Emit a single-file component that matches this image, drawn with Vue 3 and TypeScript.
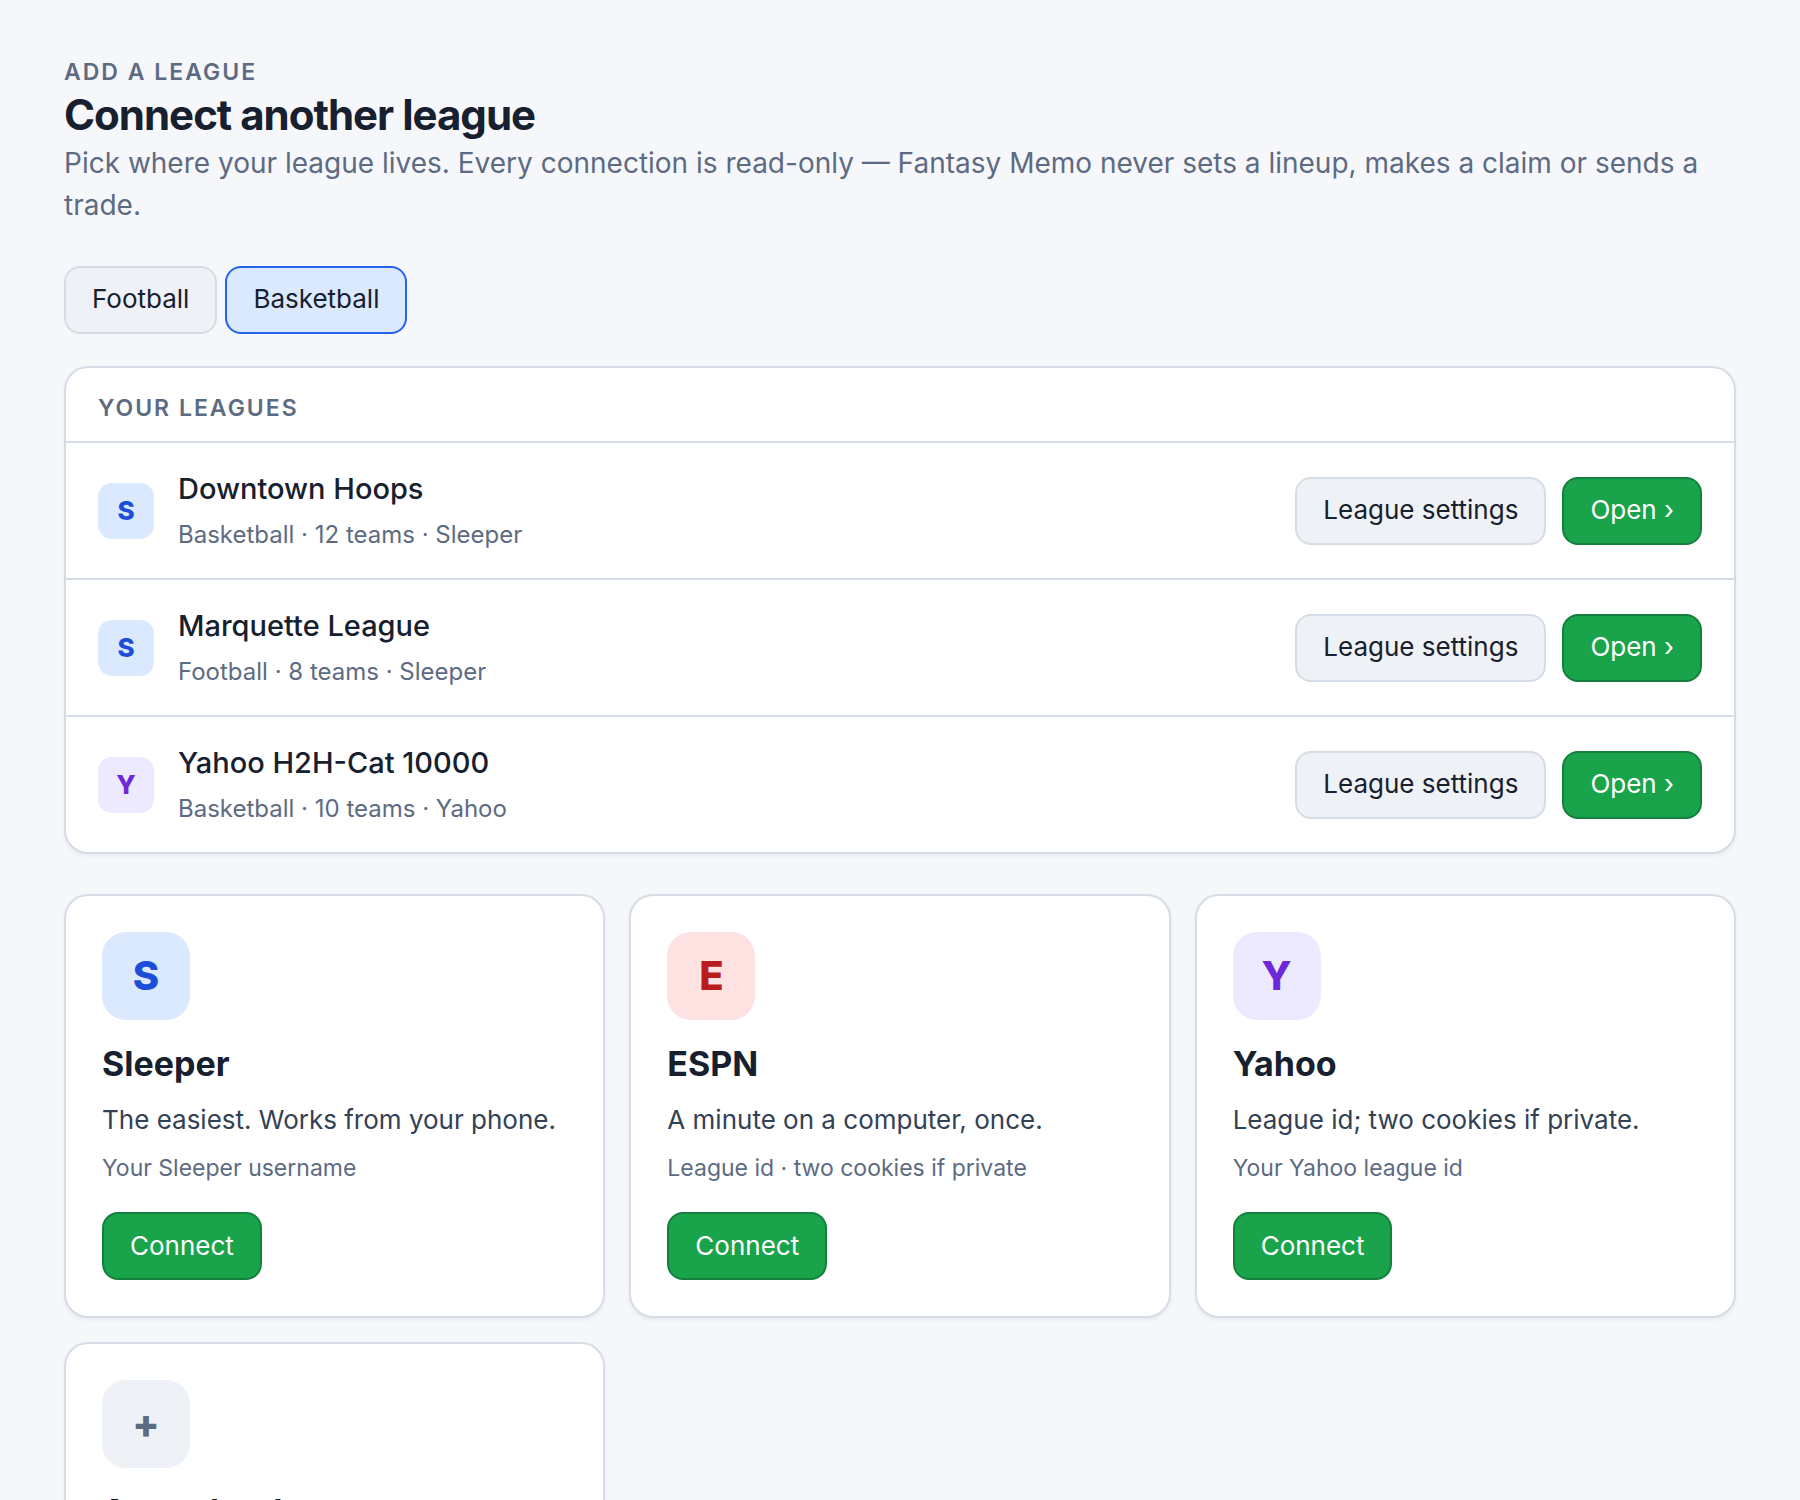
<script setup lang="ts">
import { ref } from 'vue'

type Tone = 'blue' | 'red' | 'violet' | 'plain'

interface League {
  name: string
  meta: string
  mark: string
  tone: Tone
}

interface Provider {
  name: string
  mark: string
  tone: Tone
  blurb?: string
  needs?: string
}

const sports = ['Football', 'Basketball']
const sport = ref('Basketball')

const leagues: League[] = [
  { name: 'Downtown Hoops', meta: 'Basketball · 12 teams · Sleeper', mark: 'S', tone: 'blue' },
  { name: 'Marquette League', meta: 'Football · 8 teams · Sleeper', mark: 'S', tone: 'blue' },
  { name: 'Yahoo H2H-Cat 10000', meta: 'Basketball · 10 teams · Yahoo', mark: 'Y', tone: 'violet' },
]

const providers: Provider[] = [
  { name: 'Sleeper', mark: 'S', tone: 'blue', blurb: 'The easiest. Works from your phone.', needs: 'Your Sleeper username' },
  { name: 'ESPN', mark: 'E', tone: 'red', blurb: 'A minute on a computer, once.', needs: 'League id · two cookies if private' },
  { name: 'Yahoo', mark: 'Y', tone: 'violet', blurb: 'League id; two cookies if private.', needs: 'Your Yahoo league id' },
  { name: 'Any other league', mark: '+', tone: 'plain' },
]
</script>

<template>
  <main class="page">
    <header class="intro">
      <p class="eyebrow">Add a league</p>
      <h1 class="title">Connect another league</h1>
      <p class="lead">
        Pick where your league lives. Every connection is read-only — Fantasy Memo never sets a lineup, makes a claim or sends a trade.
      </p>
    </header>

    <div class="sports" role="group" aria-label="Sport">
      <button
        v-for="s in sports"
        :key="s"
        type="button"
        class="btn"
        :class="{ active: s === sport }"
        :aria-pressed="s === sport"
        @click="sport = s"
      >{{ s }}</button>
    </div>

    <section class="panel">
      <h2 class="eyebrow panel-head">Your leagues</h2>
      <ul class="rows">
        <li v-for="l in leagues" :key="l.name" class="row">
          <span class="mark small" :class="l.tone">{{ l.mark }}</span>
          <div class="row-text">
            <p class="row-name">{{ l.name }}</p>
            <p class="hint">{{ l.meta }}</p>
          </div>
          <div class="actions">
            <button type="button" class="btn">League settings</button>
            <button type="button" class="btn primary">Open ›</button>
          </div>
        </li>
      </ul>
    </section>

    <section class="cards">
      <article v-for="p in providers" :key="p.name" class="card">
        <span class="mark" :class="p.tone">{{ p.mark }}</span>
        <h3 class="card-title">{{ p.name }}</h3>
        <p v-if="p.blurb" class="blurb">{{ p.blurb }}</p>
        <p v-if="p.needs" class="hint">{{ p.needs }}</p>
        <button v-if="p.needs" type="button" class="btn primary connect">Connect</button>
      </article>
    </section>
  </main>
</template>

<style>
body {
  margin: 0;
  background: #f6f7fb;
}
</style>

<style scoped>
.page {
  box-sizing: border-box;
  padding: 56px 64px;
  font-family: Inter, "Liberation Sans", sans-serif;
  color: #17202e;
}

p,
h1,
h2,
h3,
ul {
  margin: 0;
  padding: 0;
}

.eyebrow {
  font-size: 23px;
  line-height: 32px;
  font-weight: 600;
  letter-spacing: 2px;
  text-transform: uppercase;
  color: #5d6b82;
}

.title {
  font-size: 42px;
  line-height: 54px;
  font-weight: 700;
  letter-spacing: -1px;
}

.lead {
  font-size: 28px;
  line-height: 42px;
  color: #5d6b82;
}

.sports {
  display: flex;
  gap: 8px;
  margin-top: 40px;
}

.btn {
  box-sizing: border-box;
  height: 68px;
  padding: 0 26px 2px;
  border: 2px solid #d6dce6;
  border-radius: 16px;
  background: #eef1f6;
  color: #17202e;
  font-family: inherit;
  font-size: 26px;
  line-height: 32px;
  font-weight: 400;
  white-space: nowrap;
  cursor: pointer;
}

.btn.active {
  border-color: #2563eb;
  background: #dbe9fe;
}

.btn.primary {
  border-color: #15803d;
  background: #19a34a;
  color: #fff;
}

.panel,
.card {
  border: 2px solid #d6dce6;
  border-radius: 24px;
  background: #fff;
  box-shadow: 0 2px 4px rgba(16, 24, 40, 0.06);
}

.panel {
  margin-top: 32px;
}

.panel-head {
  padding: 24px 32px 17px;
}

.rows {
  list-style: none;
}

.row {
  display: flex;
  align-items: center;
  gap: 24px;
  min-height: 135px;
  padding: 0 32px;
  border-top: 2px solid #d6dce6;
}

.row-text {
  flex: 1;
  min-width: 0;
}

.row-name {
  font-size: 29px;
  line-height: 44px;
  font-weight: 500;
}

.hint {
  font-size: 23px;
  line-height: 36px;
  color: #5d6b82;
}

.row-text .hint {
  padding: 6px 0 2px;
  font-size: 24px;
}

.actions {
  display: flex;
  gap: 16px;
}

.mark {
  display: grid;
  place-items: center;
  width: 88px;
  height: 88px;
  border-radius: 24px;
  font-size: 40px;
  line-height: 48px;
  font-weight: 800;
}

.mark.small {
  width: 56px;
  height: 56px;
  border-radius: 14px;
  font-size: 26px;
  line-height: 32px;
}

.blue {
  background: #dbe9fe;
  color: #1d4ed8;
}

.red {
  background: #fee2e2;
  color: #b91c1c;
}

.violet {
  background: #ede9fe;
  color: #6d28d9;
}

.plain {
  background: #eef1f6;
  color: #5d6b82;
}

.cards {
  display: grid;
  grid-template-columns: repeat(3, minmax(0, 1fr));
  grid-auto-rows: 1fr;
  gap: 24px;
  margin-top: 40px;
}

.card {
  padding: 36px;
}

.card-title {
  margin-top: 20px;
  font-size: 34px;
  line-height: 48px;
  font-weight: 700;
}

.blurb {
  margin-top: 10px;
  font-size: 26px;
  line-height: 44px;
  color: #334155;
}

.card .hint {
  margin-top: 8px;
}

.btn.connect {
  display: block;
  margin-top: 26px;
  padding-bottom: 0;
}
</style>
